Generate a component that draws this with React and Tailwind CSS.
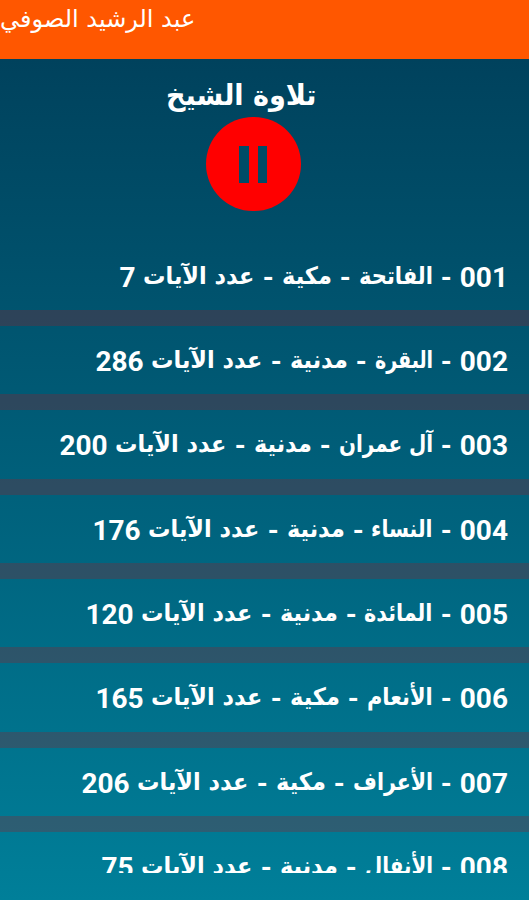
import { useLayoutEffect, useRef } from "react";

const surahs = [
  { id: "001", name: "الفاتحة", nameWidth: 74, place: "مكية", placeWidth: 50, count: "7" },
  { id: "002", name: "البقرة", nameWidth: 58, place: "مدنية", placeWidth: 58, count: "286" },
  { id: "003", name: "آل عمران", nameWidth: 94, place: "مدنية", placeWidth: 58, count: "200" },
  { id: "004", name: "النساء", nameWidth: 61, place: "مدنية", placeWidth: 58, count: "176" },
  { id: "005", name: "المائدة", nameWidth: 68, place: "مدنية", placeWidth: 58, count: "120" },
  { id: "006", name: "الأنعام", nameWidth: 66, place: "مكية", placeWidth: 50, count: "165" },
  { id: "007", name: "الأعراف", nameWidth: 80, place: "مكية", placeWidth: 50, count: "206" },
  { id: "008", name: "الأنفال", nameWidth: 68, place: "مدنية", placeWidth: 58, count: "75" },
];

// Stretches or narrows a word so that it fills exactly the given width.
function FitText({ width, children }) {
  const ref = useRef(null);
  useLayoutEffect(() => {
    const fit = () => {
      const el = ref.current;
      if (el) el.style.transform = `scaleX(${width / el.offsetWidth})`;
    };
    fit();
    document.fonts?.ready.then(fit);
  }, [width]);
  return (
    <span className="flex shrink-0 items-baseline" style={{ width }}>
      <span ref={ref} className="inline-block shrink-0 origin-right whitespace-nowrap">
        {children}
      </span>
    </span>
  );
}

function Arabic({ width, children }) {
  return (
    <span className="-translate-y-[3px] font-['DejaVu_Sans_Condensed','DejaVu_Sans',sans-serif] text-[24px]">
      <FitText width={width}>{children}</FitText>
    </span>
  );
}

function SurahRow({ surah }) {
  return (
    <li className="flex h-[84.35px] shrink-0 flex-col">
      <div className="flex h-[68.35px] items-baseline gap-2 whitespace-nowrap pr-[21px] pt-[15px] text-[28px] font-bold leading-[42px]">
        <span>{surah.id}</span>
        <span>-</span>
        <Arabic width={surah.nameWidth}>{surah.name}</Arabic>
        <span>-</span>
        <Arabic width={surah.placeWidth}>{surah.place}</Arabic>
        <span>-</span>
        <Arabic width={111}>عدد الآيات</Arabic>
        <span>{surah.count}</span>
      </div>
      <div className="h-4 bg-[#961e284d]" />
    </li>
  );
}

export default function App() {
  return (
    <div
      dir="rtl"
      className="flex h-[900px] w-[529px] flex-col overflow-hidden bg-[#007c98] font-['Roboto','DejaVu_Sans',sans-serif] text-white"
    >
      <header className="flex h-[58.5px] shrink-0 justify-end bg-[#ff5700]">
        <span className="whitespace-nowrap font-['DejaVu_Sans',sans-serif] text-[24px] leading-[39px]">
          عبد الرشيد الصوفي
        </span>
      </header>
      <main className="flex h-[841.5px] flex-col bg-gradient-to-b from-[#00425d] to-[#007f99]">
        <h1 className="mt-[15px] flex h-[43px] shrink-0 justify-center pr-[46px] font-['DejaVu_Sans_Condensed','DejaVu_Sans',sans-serif] text-[28.5px] font-bold leading-[43px]">
          <FitText width={151}>تلاوة الشيخ</FitText>
        </h1>
        <div className="flex shrink-0 justify-end pl-[206px]">
          <button aria-label="pause" className="flex size-[94.5px] items-center justify-center gap-[9px] rounded-full bg-[#ff0000] pt-px">
            <span className="h-[37px] w-[9.5px] bg-[#004c67]" />
            <span className="h-[37px] w-[9.5px] bg-[#004c67]" />
          </button>
        </div>
        <ul className="mt-[30.5px] flex h-[631.5px] shrink-0 flex-col overflow-hidden">
          {surahs.map((s) => (
            <SurahRow key={s.id} surah={s} />
          ))}
        </ul>
      </main>
    </div>
  );
}
